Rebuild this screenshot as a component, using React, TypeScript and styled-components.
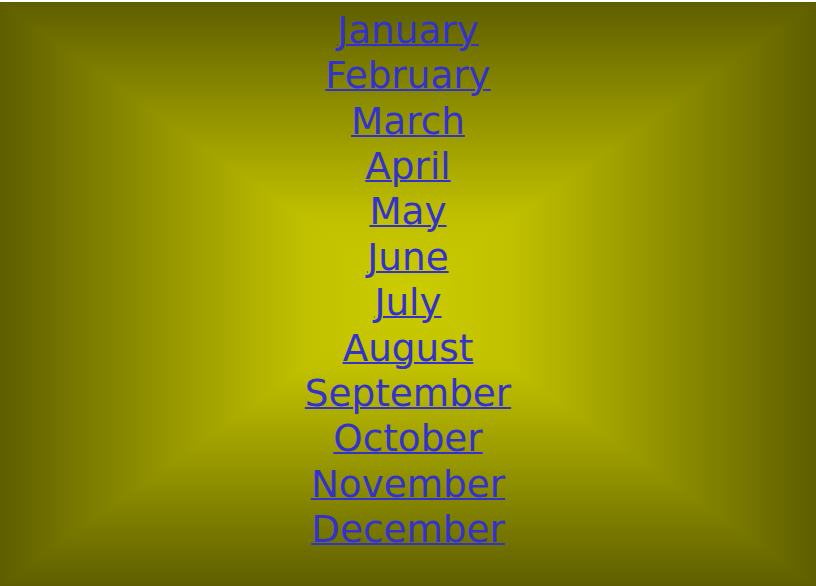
import React from "react";
import styled, { createGlobalStyle } from "styled-components";

const GlobalStyle = createGlobalStyle`
  html, body {
    margin: 0;
    padding: 0;
    background: #ffffff;
  }
  body {
    font-family: "DejaVu Sans", Verdana, sans-serif;
  }
`;

const stops = `
  #5e5e00 0%,
  #8f8f00 18%,
  #c0c000 37%,
  #cccc00 50%,
  #c0c000 63%,
  #8f8f00 82%,
  #5e5e00 100%
`;

const boxMask = `conic-gradient(
  from 0deg at 50% 50%,
  #000 0deg 54.41deg,
  transparent 54.41deg 125.59deg,
  #000 125.59deg 234.41deg,
  transparent 234.41deg 305.59deg,
  #000 305.59deg
)`;

const Page = styled.main`
  position: relative;
  box-sizing: border-box;
  width: 816px;
  height: 584px;
  margin: 2px 0 0 0;
  padding-top: 6px;
  background: linear-gradient(to right, ${stops});
  overflow: hidden;

  &::before {
    content: "";
    position: absolute;
    inset: 0;
    background: linear-gradient(to bottom, ${stops});
    -webkit-mask-image: ${boxMask};
    mask-image: ${boxMask};
  }
`;

const MonthList = styled.nav`
  position: relative;
  display: flex;
  flex-direction: column;
  align-items: center;
`;

const MonthLink = styled.a`
  font-family: "DejaVu Sans", Verdana, sans-serif;
  font-size: 37.33px;
  line-height: 45.36px;
  color: #3333cc;
  text-decoration: underline;
  text-decoration-thickness: 2px;
`;

const months = [
  "January",
  "February",
  "March",
  "April",
  "May",
  "June",
  "July",
  "August",
  "September",
  "October",
  "November",
  "December",
];

export default function App() {
  return (
    <>
      <GlobalStyle />
      <Page>
        <MonthList>
          {months.map((m) => (
            <MonthLink key={m} href={`#${m.toLowerCase()}`}>
              {m}
            </MonthLink>
          ))}
        </MonthList>
      </Page>
    </>
  );
}
